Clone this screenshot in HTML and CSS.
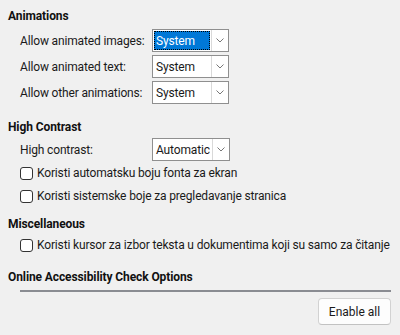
FILE: index.html
```html
<!DOCTYPE html>
<html lang="en">
<head>
<meta charset="utf-8">
<title>Accessibility options</title>
<link rel="stylesheet" href="styles.css">
</head>
<body>
<div class="page">
  <section class="group group-anim">
    <h2 class="group-title">Animations</h2>
    <div class="form-grid">
      <span class="field-label">Allow animated images:</span>
      <div class="combo combo-focused">
        <span class="combo-value"><span class="combo-text">System</span></span>
        <span class="combo-arrow"><svg width="8" height="5" viewBox="0 0 8 5"><path d="M0.5 0.5 L4 4 L7.5 0.5" fill="none" stroke="#777" stroke-width="1"/></svg></span>
      </div>
      <span class="field-label">Allow animated text:</span>
      <div class="combo">
        <span class="combo-value"><span class="combo-text">System</span></span>
        <span class="combo-arrow"><svg width="8" height="5" viewBox="0 0 8 5"><path d="M0.5 0.5 L4 4 L7.5 0.5" fill="none" stroke="#777" stroke-width="1"/></svg></span>
      </div>
      <span class="field-label">Allow other animations:</span>
      <div class="combo">
        <span class="combo-value"><span class="combo-text">System</span></span>
        <span class="combo-arrow"><svg width="8" height="5" viewBox="0 0 8 5"><path d="M0.5 0.5 L4 4 L7.5 0.5" fill="none" stroke="#777" stroke-width="1"/></svg></span>
      </div>
    </div>
  </section>

  <section class="group group-contrast">
    <h2 class="group-title">High Contrast</h2>
    <div class="form-grid">
      <span class="field-label">High contrast:</span>
      <div class="combo combo-wide">
        <span class="combo-value"><span class="combo-text">Automatic</span></span>
        <span class="combo-arrow"><svg width="8" height="5" viewBox="0 0 8 5"><path d="M0.5 0.5 L4 4 L7.5 0.5" fill="none" stroke="#777" stroke-width="1"/></svg></span>
      </div>
    </div>
    <label class="check-row"><span class="check-box"></span><span>Koristi automatsku boju fonta za ekran</span></label>
    <label class="check-row"><span class="check-box"></span><span>Koristi sistemske boje za pregledavanje stranica</span></label>
  </section>

  <section class="group group-misc">
    <h2 class="group-title">Miscellaneous</h2>
    <label class="check-row"><span class="check-box"></span><span>Koristi kursor za izbor teksta u dokumentima koji su samo za čitanje</span></label>
  </section>

  <section class="group group-online">
    <h2 class="group-title">Online Accessibility Check Options</h2>
    <div class="separator"></div>
    <div class="actions">
      <button class="btn" type="button">Enable all</button>
    </div>
  </section>
</div>
</body>
</html>
```

FILE: styles.css
```css
html, body {
  margin: 0;
  padding: 0;
  background: #f0f0f0;
}

body {
  font-family: "Segoe UI", Roboto, "Open Sans", sans-serif;
  font-size: 12px;
  letter-spacing: -0.15px;
  color: #1a1a1a;
}

.page {
  padding: 8px 9px 0 8px;
  display: flex;
  flex-direction: column;
}

.group-title {
  margin: 0;
  font-size: 12px;
  font-weight: 700;
  letter-spacing: -0.1px;
  line-height: 16px;
  height: 16px;
  color: #111;
}

.group-anim { margin-bottom: 15px; }
.group-contrast { margin-bottom: 10px; }
.group-misc { margin-bottom: 14px; }

.group-anim .form-grid { margin-top: 5px; }
.group-contrast .form-grid { margin-top: 3px; }

.form-grid {
  display: grid;
  grid-template-columns: 132px 77px;
  row-gap: 3px;
  padding-left: 12px;
  align-items: center;
}

.field-label {
  line-height: 16px;
  white-space: nowrap;
}

.combo {
  height: 23px;
  box-sizing: border-box;
  border: 1px solid #8f8f8f;
  background: #fff;
  display: flex;
  align-items: stretch;
}

.combo-wide { width: 78px; }

.combo-value {
  flex: 1;
  display: flex;
  align-items: center;
  padding: 1px;
  min-width: 0;
}

.combo-text {
  flex: 1;
  height: 100%;
  box-sizing: border-box;
  display: flex;
  align-items: center;
  padding-left: 1px;
  white-space: nowrap;
  overflow: hidden;
  border: 1px solid transparent;
}

.combo-focused .combo-text {
  background: #0078d7;
  color: #fff;
  border: 1px dotted #000;
}

.combo-arrow {
  width: 16px;
  border-left: 1px solid #d9d9d9;
  display: flex;
  align-items: center;
  justify-content: center;
}

.check-row {
  display: flex;
  align-items: center;
  gap: 4px;
  height: 20px;
  padding-left: 12px;
  white-space: nowrap;
}

.group-contrast .check-row:first-of-type { margin-top: 2px; }
.group-contrast .check-row + .check-row { margin-top: 3px; }
.group-misc .check-row { margin-top: 3px; }

.check-box {
  width: 13px;
  height: 13px;
  box-sizing: border-box;
  border: 1px solid #333;
  border-radius: 3px;
  background: #fff;
  flex: none;
}

.separator {
  margin: 5px 0 0 12px;
  height: 2px;
  background: #8a8c92;
}

.actions {
  display: flex;
  justify-content: flex-end;
  margin-top: 6px;
}

.btn {
  width: 73px;
  height: 27px;
  box-sizing: border-box;
  border: 1px solid #d2d2d2;
  border-bottom-color: #c2c2c2;
  border-radius: 4px;
  background: #fdfdfd;
  font: inherit;
  color: #1a1a1a;
  padding: 0;
}
```
